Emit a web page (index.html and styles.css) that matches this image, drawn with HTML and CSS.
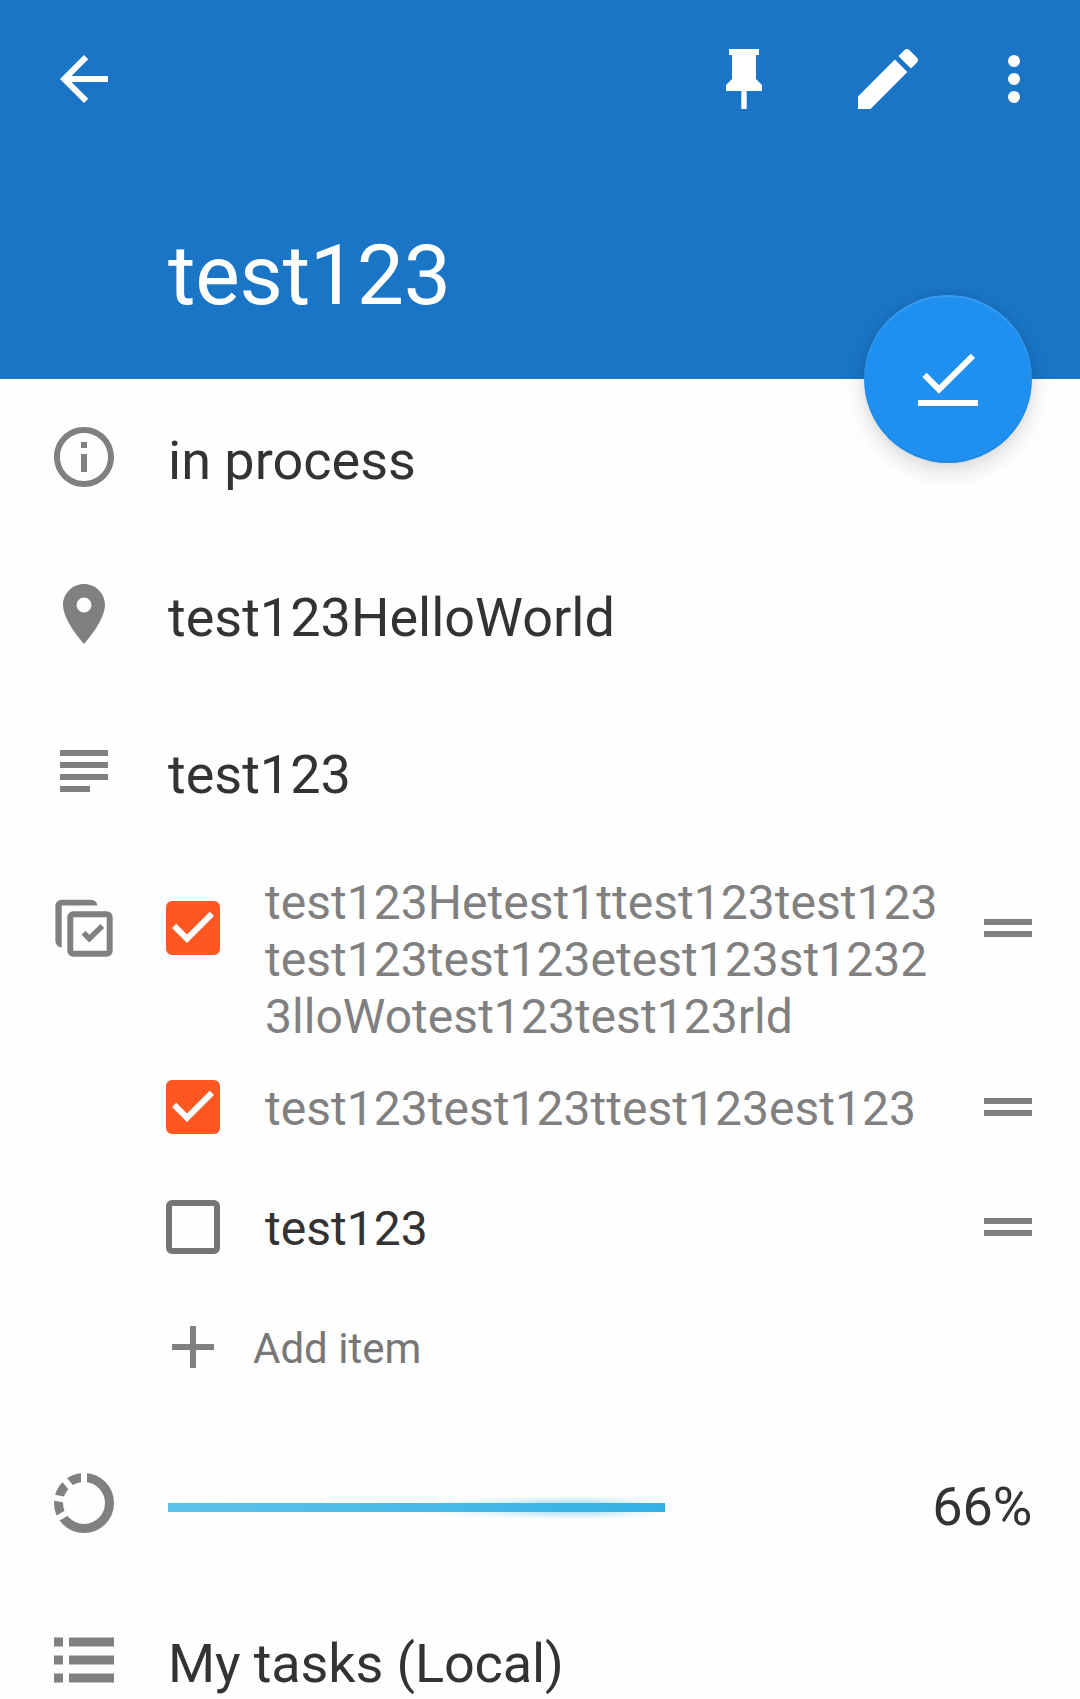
FILE: index.html
```html
<!DOCTYPE html>
<html lang="en">
<head>
<meta charset="utf-8">
<title>test123</title>
<link rel="stylesheet" href="styles.css">
</head>
<body>
<header class="header">
  <div class="toolbar">
    <svg class="icon" viewBox="0 0 24 24"><path d="M20 11H7.83l5.59-5.59L12 4l-8 8 8 8 1.41-1.41L7.83 13H20v-2z"/></svg>
    <div class="actions">
      <svg class="icon" viewBox="0 0 72 72"><path d="M21 6h30v6h-3v24l6 6v6H38.7v18h-5.4V48H18v-6l6-6V12h-3z"/></svg>
      <svg class="icon icon-edit" viewBox="0 0 24 24"><path d="M20.71 7.04C21.1 6.65 21.1 6 20.71 5.63L18.37 3.29C18 2.9 17.35 2.9 16.96 3.29L15.12 5.12L18.87 8.87M3 17.25V21H6.75L17.81 9.93L14.06 6.18L3 17.25Z"/></svg>
      <svg class="icon" viewBox="0 0 24 24"><circle cx="12" cy="6" r="2"/><circle cx="12" cy="12" r="2"/><circle cx="12" cy="18" r="2"/></svg>
    </div>
  </div>
  <h1 class="title">test123</h1>
  <button class="fab" aria-label="Complete">
    <svg class="fab-icon" viewBox="0 0 72 72"><path d="M12.5 31.9L27 46.4L60.9 12.900"/><path d="M6 60h60"/></svg>
  </button>
</header>
<main>
  <section class="row">
    <svg class="icon" viewBox="0 0 24 24"><path d="M11 17h2v-6h-2v6zm1-15C6.48 2 2 6.48 2 12s4.480 10 10 10 10-4.480 10-10S17.520 2 12 2zm0 18c-4.410 0-8-3.590-8-8s3.590-8 8-8 8 3.590 8 8-3.590 8-8 8zM11 9h2V7h-2v2z"/></svg>
    <p class="text">in process</p>
  </section>
  <section class="row">
    <svg class="icon" viewBox="0 0 24 24"><path d="M12 2C8.130 2 5 5.130 5 9c0 5.250 7 13 7 13s7-7.750 7-13c0-3.870-3.130-7-7-7zm0 9.500a2.500 2.500 0 0 1 0-5 2.500 2.500 0 0 1 0 5z"/></svg>
    <p class="text">test123HelloWorld</p>
  </section>
  <section class="row">
    <svg class="icon" viewBox="0 0 24 24"><path d="M4 5h16v2H4zM4 9h16v2H4zM4 13h16v2H4zM4 17h10v2H4z"/></svg>
    <p class="text">test123</p>
  </section>
  <section class="row checklist">
    <svg class="icon" viewBox="0 0 72 72">
      <path d="M7.400 55.300V14a6.300 6.300 0 0 1 6.300-6.300H43a6.300 6.300 0 0 1 6.300 5.700H13.700V55.300A6.300 6.300 0 0 1 7.400 49z"/>
      <rect class="line" x="22.300" y="22.300" width="39.400" height="39.400" rx="3"/>
      <path class="tick" d="M35.500 40.800L41.300 46.600L54.300 34"/>
    </svg>
    <div class="items">
      <div class="item done">
        <svg class="box" viewBox="3 3 18 18"><path d="M19 3H5a2 2 0 0 0-2 2v14a2 2 0 0 0 2 2h14a2 2 0 0 0 2-2V5a2 2 0 0 0-2-2zM10 17l-5-5 1.410-1.410L10 14.170l7.590-7.590L19 8l-9 9z"/></svg>
        <p class="label">test123Hetest1ttest123test123test123test123etest123st12323lloWotest123test123rld</p>
        <svg class="handle" viewBox="0 0 48 18"><path d="M0 0h48v6H0zM0 12h48v6H0z"/></svg>
      </div>
      <div class="item done">
        <svg class="box" viewBox="3 3 18 18"><path d="M19 3H5a2 2 0 0 0-2 2v14a2 2 0 0 0 2 2h14a2 2 0 0 0 2-2V5a2 2 0 0 0-2-2zM10 17l-5-5 1.410-1.410L10 14.170l7.590-7.590L19 8l-9 9z"/></svg>
        <p class="label">test123test123ttest123est123</p>
        <svg class="handle" viewBox="0 0 48 18"><path d="M0 0h48v6H0zM0 12h48v6H0z"/></svg>
      </div>
      <div class="item">
        <svg class="box" viewBox="3 3 18 18"><path d="M19 5v14H5V5h14m0-2H5a2 2 0 0 0-2 2v14a2 2 0 0 0 2 2h14a2 2 0 0 0 2-2V5a2 2 0 0 0-2-2z"/></svg>
        <p class="label">test123</p>
        <svg class="handle" viewBox="0 0 48 18"><path d="M0 0h48v6H0zM0 12h48v6H0z"/></svg>
      </div>
      <div class="add">
        <svg class="plus" viewBox="5 5 14 14"><path d="M19 13h-6v6h-2v-6H5v-2h6V5h2v6h6v2z"/></svg>
        <span class="add-label">Add item</span>
      </div>
    </div>
  </section>
  <section class="row">
    <svg class="icon" viewBox="-36 -36 72 72">
      <circle class="ring" r="25.500"/>
      <g class="cuts"><path d="M0-18V-33"/><path d="M0-18V-33" transform="rotate(-40)"/><path d="M0-18V-33" transform="rotate(-80)"/><path d="M0-18V-33" transform="rotate(-120)"/></g>
    </svg>
    <div class="track"><div class="fill" style="width:66%"></div></div>
    <p class="text percent">66%</p>
  </section>
  <section class="row">
    <svg class="icon" viewBox="0 0 72 72"><path d="M6 13.500h9v9H6zM21 13.500h45v9H21zM6 31.500h9v9H6zM21 31.500h45v9H21zM6 49.500h9v9H6zM21 49.500h45v9H21z"/></svg>
    <p class="text list-name">My tasks (Local)</p>
  </section>
</main>
</body>
</html>
```
FILE: styles.css
```css
* { box-sizing: border-box; }

body {
  margin: 0;
  height: 1699px;
  overflow: hidden;
  background: #fefefe;
  color: #333;
  font-family: Roboto, sans-serif;
}

h1, p { margin: 0; font-weight: 400; }

svg { display: block; flex: none; fill: currentColor; }

.icon { width: 72px; height: 72px; color: #808080; }

/* Header */
.header {
  position: relative;
  height: 379px;
  background: #1a75c6;
  color: #fff;
}

.toolbar {
  display: flex;
  justify-content: space-between;
  align-items: center;
  height: 158px;
  padding: 0 30px 0 48px;
}

.toolbar .icon { color: #fff; }

.actions { display: flex; align-items: center; gap: 50px; }
.actions .icon-edit { width: 80px; height: 80px; margin: 0 0 0 18px; }

.title {
  padding: 69px 0 0 168px;
  font-size: 84px;
  line-height: 98px;
  letter-spacing: -.25px;
}

.fab {
  position: absolute;
  right: 48px;
  bottom: -84px;
  width: 168px;
  height: 168px;
  display: grid;
  place-items: center;
  padding: 0;
  border: 0;
  border-radius: 50%;
  background: #2090f0;
  color: #fff;
  box-shadow: 0 8px 22px rgba(0, 0, 0, .14), 0 0 8px rgba(0, 0, 0, .06),
    inset 0 2px 1px rgba(255, 255, 255, .12), inset 0 -2px 1px rgba(0, 0, 0, .06);
}

.fab-icon {
  width: 72px;
  height: 72px;
  fill: none;
  stroke: #fff;
  stroke-width: 6;
}

/* Rows */
.row {
  display: flex;
  align-items: flex-start;
  height: 157px;
  padding: 42px 48px 0;
}

.text {
  margin: 8px 0 0 48px;
  font-size: 54px;
  line-height: 63px;
  white-space: nowrap;
}

.list-name { letter-spacing: -.12px; }

.checklist { height: 575px; padding: 18px 48px 0; }
.checklist > .icon { margin-top: 24px; }
.line { fill: none; stroke: currentColor; stroke-width: 6; }
.tick { fill: none; stroke: currentColor; stroke-width: 5.5; }

.items { flex: 1; padding-left: 46px; }

.item {
  display: flex;
  align-items: flex-start;
  min-height: 120px;
  font-size: 48px;
  line-height: 57px;
  letter-spacing: .03px;
}

.item .box { width: 54px; height: 54px; margin-top: 33px; color: #757575; }
.item.done .box { color: #ff5722; }
.item.done .label { color: #808080; }

.label { width: 684px; margin: 33px 0 0 45px; word-break: break-all; }

.item:first-child { height: 179px; }
.item:first-child .label { margin-top: 6px; }

.handle { width: 48px; height: 18px; margin: 51px 0 0 auto; color: #808080; }

.add { display: flex; align-items: center; height: 120px; padding-left: 6px; color: #808080; }
.plus { width: 42px; height: 42px; }
.add-label { margin-left: 39px; padding-top: 4px; font-size: 42px; line-height: 50px; color: #777; }

/* Progress */
.ring { fill: none; stroke: currentColor; stroke-width: 9; }
.cuts { stroke: #fefefe; stroke-width: 6; }

.track { width: 753px; margin: 36px 0 0 48px; }

.fill {
  position: relative;
  height: 9px;
  background: linear-gradient(90deg, #5dc3ea, #33b1e5);
}

/* Glow behind the leading end of the bar */
.fill::before {
  content: "";
  position: absolute;
  z-index: -1;
  right: 0;
  top: -8px;
  width: 290px;
  height: 25px;
  background: radial-gradient(ellipse 210px 12px at 205px 50%, rgba(51, 181, 229, .5), rgba(51, 181, 229, .28) 50%, rgba(51, 181, 229, 0));
  clip-path: ellipse(290px 13px at 100% 50%);
  mask-image: linear-gradient(90deg, transparent, #000 60%, #000 75%, transparent);
}

.percent { margin-left: auto; letter-spacing: -.2px; }
```
